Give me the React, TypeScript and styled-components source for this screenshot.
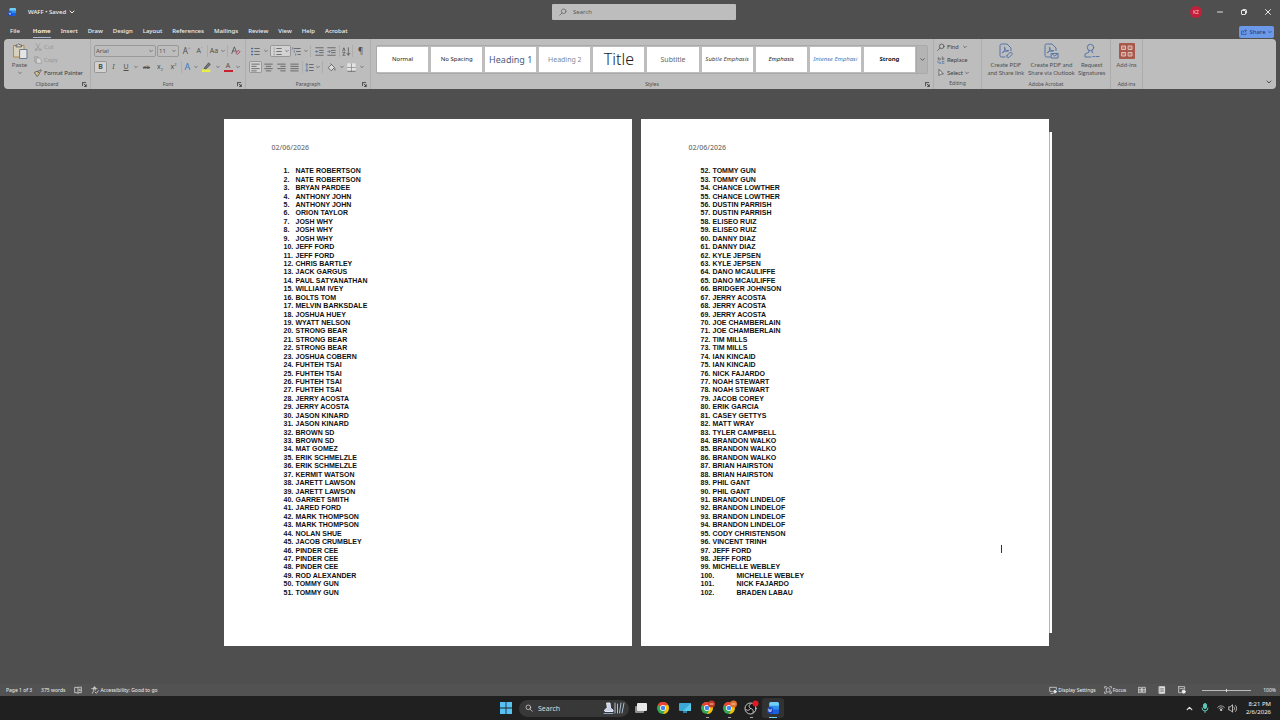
import React from 'react';
import styled, { createGlobalStyle, css } from 'styled-components';

const UI = '"Noto Sans", "Open Sans", sans-serif';

const GlobalStyle = createGlobalStyle`
  * { box-sizing: border-box; }
  body { margin: 0; background: #4f4f4f; font-family: ${UI}; }
  button, input, select { font-family: inherit; margin: 0; padding: 0; border: 0; background: none; color: inherit; }
  ol { list-style: none; margin: 0; padding: 0; }
`;

/* ---------- icons ---------- */

const Svg = styled.svg`
  display: block;
  flex: none;
  fill: none;
  stroke: currentColor;
  stroke-linecap: round;
  stroke-linejoin: round;
`;

type IconProps = { size?: number; children: React.ReactNode; sw?: number };
const Icon = ({ size = 10, children, sw = 1 }: IconProps) => (
  <Svg width={size} height={size} viewBox="0 0 12 12" strokeWidth={sw} aria-hidden="true">
    {children}
  </Svg>
);

const Chevron = ({ size = 5 }: { size?: number }) => (
  <Icon size={size} sw={2}><path d="M2 4l4 4 4-4" /></Icon>
);

const WordLogo = ({ size = 8 }: { size?: number }) => (
  <Svg width={size} height={size} viewBox="0 0 16 16" strokeWidth={0} aria-hidden="true">
    <rect x="3" y="0" width="13" height="16" rx="2" fill="#1b5fe0" />
    <path d="M3 2a2 2 0 012-2h9a2 2 0 012 2v4H3z" fill="#6fcdf8" />
    <path d="M3 5h13v5H3z" fill="#2f8eea" />
    <rect x="0" y="7" width="8" height="8" rx="2" fill="#1443c0" />
    <path d="M2 9.500l1 3.500 1-3 1 3 1-3.500" stroke="#dbe6ff" strokeWidth="1" />
  </Svg>
);

const PasteIcon = () => (
  <Svg width="16" height="16" viewBox="0 0 16 16" strokeWidth="1" aria-hidden="true">
    <path d="M8 14H1.500V2.500H12V6" stroke="#b08b45" fill="#d8cfbd" />
    <path d="M4 3.500V2h1.500L6.800.8 8 2h1.500v1.500z" stroke="#666" fill="#ddd" />
    <rect x="8" y="6.500" width="7" height="9" stroke="#6d7b8c" fill="#e4e4e4" />
  </Svg>
);
const CutIcon = () => <Icon size={8}><path d="M3 1l5 8M9 1L4 9" /><circle cx="3" cy="10" r="1.400" /><circle cx="9" cy="10" r="1.400" /></Icon>;
const CopyIcon = () => <Icon size={8}><path d="M4 9H1V1h5v2" /><path d="M4 3h4l3 3v5H4z" fill="#d4d4d4" /></Icon>;
const BrushIcon = () => <Icon size={8}><path d="M1 5l4-2 3 4-3 4z" fill="#d9c088" /><path d="M6 4l4-3 1 2-3 3" /></Icon>;

const LauncherIcon = () => <Icon size={5} sw={2}><path d="M1 9V1h8" /><path d="M5 5l5 5M10 6v5H6" /></Icon>;

const Letter = styled.span<{ $size?: number; $color?: string; $bar?: string; $italic?: boolean; $bold?: boolean; $deco?: string }>`
  font-size: ${p => p.$size ?? 7}px;
  line-height: 8px;
  color: ${p => p.$color ?? 'inherit'};
  font-style: ${p => (p.$italic ? 'italic' : 'normal')};
  font-weight: ${p => (p.$bold ? 700 : 400)};
  text-decoration: ${p => p.$deco ?? 'none'};
  ${p => p.$bar && css`min-width: 9px; border-bottom: 2px solid ${p.$bar};`}
  sup, sub { font-size: 4px; line-height: 0; }
`;

const ClearIcon = () => <Icon size={10}><path d="M1 9l3-8 3 7M2 6h3" /><path d="M6 8l3-3 2 2-3 3z" stroke="#a5486a" fill="#cf9db0" /></Icon>;
const HighlighterIcon = () => <Icon size={10}><path d="M0 10.500h10" stroke="#e6f042" strokeWidth="3" strokeLinecap="butt" /><path d="M3 7l5-6 2 2-5 5H3z" fill="#777" /></Icon>;
const BulletsIcon = () => (
  <Icon size={9}><path d="M1 2h1M1 6h1M1 10h1" stroke="#3f6ba8" strokeWidth="2" /><path d="M5 2h6M5 6h6M5 10h6" /></Icon>
);
const NumberingIcon = () => (
  <Icon size={9}><path d="M1.500 1v2M1.500 5v2M1.500 9v2" stroke="#888" /><path d="M5 2h6M5 6h6M5 10h6" /></Icon>
);
const MultiIcon = () => (
  <Icon size={9}><path d="M1 1v2M3 5v2M5 9v2" stroke="#4d6f9d" /><path d="M3 2h8M6 6h5M8 10h3" /></Icon>
);
const OutdentIcon = ({ flip }: { flip?: boolean }) => (
  <Icon size={9}><path d="M1 1h10M6 4.500h5M6 7.500h5M1 11h10" /><path d={flip ? 'M1 6h3M3 4.500L4.500 6 3 7.500' : 'M4 6H1M2.500 4.500L1 6l1.500 1.500'} stroke="#4d6f9d" /></Icon>
);
const SortIcon = () => <Icon size={9}><path d="M1 5l1.500-4L4 5M1 7h3l-3 4h3M8.500 1v9.500M6.500 8.500l2 2.500 2-2.500" /></Icon>;
const AlignIcon = ({ kind }: { kind: 'left' | 'center' | 'right' | 'full' }) => {
  const d = {
    left: 'M1 1.500h10M1 4.500h6M1 7.500h10M1 10.500h6',
    center: 'M1 1.500h10M3 4.500h6M1 7.500h10M3 10.500h6',
    right: 'M1 1.500h10M5 4.500h6M1 7.500h10M5 10.500h6',
    full: 'M1 1.500h10M1 4.500h10M1 7.500h10M1 10.500h10',
  }[kind];
  return <Icon size={9}><path d={d} /></Icon>;
};
const SpacingIcon = () => <Icon size={9}><path d="M2.500 1v10M1 2.500L2.500 1 4 2.500M1 9.500L2.500 11 4 9.500" stroke="#4d6f9d" /><path d="M6 2h5M6 6h5M6 10h5" /></Icon>;
const ShadeIcon = () => <Icon size={9}><path d="M2 6l4-4 4 4-4 4zM5 1l1 1M10.500 7.500v2" fill="#dcdcdc" /></Icon>;
const BordersIcon = () => <Icon size={9}><rect x="1" y="1" width="10" height="10" fill="#e4e4e4" stroke="#e4e4e4" /><path d="M6 1v10M1 6h10" stroke="#888" /><path d="M1 11h10" stroke="#444" /></Icon>;

const SearchIcon = ({ size = 8, flip }: { size?: number; flip?: boolean }) => (
  <Icon size={size}>{flip
    ? <><circle cx="7" cy="5" r="3.500" /><path d="M4.500 7.500L1 11" /></>
    : <><circle cx="5" cy="5" r="3.500" /><path d="M7.500 7.500L11 11" /></>}</Icon>
);
const ReplaceIcon = () => <Icon size={8}><path d="M2 2v4h3V3.500H2M8 5V1M8 5h2.500V3H8" stroke="#6a6a6a" /><path d="M1 8c0 2 2 3 4 3M4 9l1.500 2" stroke="#3f6ba8" /><path d="M10.500 8H8v3h2.500" stroke="#3f6ba8" /></Icon>;
const SelectIcon = () => <Icon size={8}><path d="M3 1v9l2.500-2.500L9 7.500z" fill="#e0e0e0" /></Icon>;

const PdfIcon = ({ outlook }: { outlook?: boolean }) => (
  <Svg width="16" height="16" viewBox="0 0 16 16" strokeWidth="1" aria-hidden="true">
    <path d="M7 14H3.500A1.500 1.500 0 012 12.500v-10A1.500 1.500 0 013.500 1H9l4 4v2.500" />
    <path d="M4.500 9.500C6 9 7.500 6.500 7 4.500c-.8-.8-1 .5 0 2S9.500 9 10.500 8s-2.500-.8-6 1.500z" />
    {outlook
      ? <><rect x="8.500" y="10.500" width="6.500" height="4.500" /><path d="M8.500 10.500l3.200 2.500 3.300-2.500" /></>
      : <><path d="M9 12.500l3-3a1.500 1.500 0 012 2l-3 3a1.500 1.500 0 01-2-2z" /></>}
  </Svg>
);
const SignIcon = () => (
  <Svg width="16" height="16" viewBox="0 0 16 16" strokeWidth="1" aria-hidden="true">
    <circle cx="6.500" cy="4.500" r="3.200" />
    <path d="M5 7.500v1.700L1 11v3h6M8 7.500v1.700l1 .6M9 13.500h1.500M12 13.500h3" />
  </Svg>
);
const AddInsIcon = () => (
  <Svg width="16" height="16" viewBox="0 0 16 16" strokeWidth="1" aria-hidden="true">
    <rect x="0" y="0" width="16" height="16" rx="1" fill="#a9594b" stroke="none" />
    <path d="M3 3h3.500v3.500H3zM9.500 3H13v3.500H9.500zM3 9.500h3.500V13H3zM9.500 9.500H13V13H9.500z" stroke="#dcc0ba" fill="#b9796d" />
  </Svg>
);

/* ---------- title bar ---------- */

const Shell = styled.div`
  display: flex;
  flex-direction: column;
  min-height: 100vh;
  background: #4f4f4f;
  color: #e6e6e6;
`;

const TitleBar = styled.header`
  display: grid;
  grid-template-columns: 1fr 184px 1fr;
  align-items: center;
  height: 24px;
  padding-left: 8px;
`;

const DocName = styled.div`
  display: flex;
  align-items: center;
  gap: 12px;
`;

const NameButton = styled.button`
  display: flex;
  align-items: center;
  gap: 3px;
  font-size: 6px;
  font-weight: 500;
  color: #efefef;
`;

const SearchBox = styled.label`
  display: flex;
  align-items: center;
  gap: 6px;
  height: 16px;
  padding: 0 7px;
  border-radius: 1px;
  background: #bdbdbd;
  color: #5a5a5a;

  input { flex: 1; min-width: 0; font-size: 6px; outline: 0; }
  input::placeholder { color: #5a5a5a; opacity: 1; }
`;

const WindowControls = styled.div`
  display: flex;
  justify-content: flex-end;
  gap: 8px;
  padding-right: 4px;
`;

const WindowButton = styled.button`
  display: flex;
  align-items: center;
  justify-content: center;
  width: 16px;
  height: 16px;
`;

const Avatar = styled.span`
  width: 12px;
  height: 12px;
  border-radius: 50%;
  background: #c2203a;
  color: #f5d0d6;
  font-size: 5px;
  line-height: 12px;
`;

/* ---------- ribbon tabs ---------- */

const TabRow = styled.nav`
  display: flex;
  align-items: center;
  justify-content: space-between;
  height: 15px;
  padding: 0 6px 0 10px;
`;

const Tabs = styled.div`
  display: flex;
  gap: 10px;
`;

const Tab = styled.button<{ $active?: boolean }>`
  height: 12px;
  font-size: 6px;
  line-height: 10px;
  font-weight: ${p => (p.$active ? 700 : 500)};
  color: #f0f0f0;
  border-bottom: 1px solid ${p => (p.$active ? '#a9b6d8' : 'transparent')};

  &:first-child { margin-right: 3px; }
`;

const ShareButton = styled.button`
  display: flex;
  align-items: center;
  justify-content: center;
  gap: 2px;
  width: 35px;
  height: 12px;
  border-radius: 2px;
  background: #6c98ea;
  color: #1d3767;
  font-size: 6px;
`;

/* ---------- ribbon ---------- */

const Ribbon = styled.section`
  display: flex;
  height: 50px;
  margin: 0 4px;
  border-radius: 4px;
  background: #bdbdbd;
  color: #505050;
`;

const Group = styled.div<{ $w: number }>`
  display: flex;
  flex-direction: column;
  flex: none;
  width: ${p => p.$w}px;
  padding: 3px 3px 0;
  border-right: 1px solid #adadad;
`;

const GroupBody = styled.div`
  flex: 1;
  display: flex;
  flex-direction: column;
  gap: 4px;
  padding-top: 3px;
`;

const GroupFoot = styled.div`
  display: grid;
  grid-template-columns: 1fr auto 1fr;
  align-items: center;
  height: 10px;
  font-size: 5px;
  line-height: 6px;
  color: #4c4c4c;

  button { justify-self: end; color: #333; }
`;

const ToolRow = styled.div`
  display: flex;
  height: 12px;
`;

const Tool = styled.button<{ $w: number; $on?: boolean; $ml?: number }>`
  display: flex;
  align-items: center;
  justify-content: center;
  gap: 3px;
  flex: none;
  width: ${p => p.$w}px;
  height: 12px;
  margin-left: ${p => p.$ml ?? 0}px;
  border-radius: 2px;
  ${p => p.$on && css`background: #d2d2d2; box-shadow: inset 0 0 0 1px #979797;`}
`;

const Divider = styled.span<{ $w?: number }>`
  flex: none;
  width: 1px;
  height: 12px;
  margin: 0 1px;
  margin-right: ${p => (p.$w ?? 3) - 2}px;
  background: #adadad;
`;

const Combo = styled.div<{ $w: number }>`
  display: flex;
  align-items: center;
  width: ${p => p.$w}px;
  height: 12px;
  padding: 0 2px 0 1px;
  margin-right: 1px;
  border: 1px solid #999;
  border-radius: 2px;

  select { flex: 1; min-width: 0; appearance: none; font-size: 6px; outline: 0; }
`;

const ClipBody = styled.div`
  flex: 1;
  display: flex;
  gap: 4px;
  padding-left: 2px;
`;

const BigButton = styled.button<{ $w: number }>`
  display: flex;
  flex-direction: column;
  align-items: center;
  width: ${p => p.$w}px;
  padding-top: 1px;
  font-size: 6px;
  line-height: 8px;
  gap: 2px;
`;

const Stack = styled.div`
  display: flex;
  flex-direction: column;
  gap: 3px;
`;

const SmallButton = styled.button<{ $dim?: boolean }>`
  display: flex;
  align-items: center;
  gap: 2px;
  height: 10px;
  font-family: Lato, sans-serif;
  font-size: 6px;
  line-height: 8px;
  white-space: nowrap;
  color: ${p => (p.$dim ? '#959595' : '#404040')};
`;

const Gallery = styled.div`
  display: flex;
  width: 552px;
  height: 29px;
  margin-left: 2px;
  border: 1px solid #a9a9a9;
  border-radius: 2px;
`;

const Cards = styled.div`
  flex: 1;
  display: flex;
  gap: 3px;
  padding: 1px 1px 1px 0;
`;

const StyleCard = styled.button<{ $size: number; $color?: string; $italic?: boolean; $bold?: boolean; $light?: boolean }>`
  flex: 1 1 0;
  min-width: 0;
  overflow: hidden;
  white-space: nowrap;
  background: #fff;
  font-size: ${p => p.$size}px;
  line-height: 25px;
  color: ${p => p.$color ?? '#1c1c1c'};
  font-style: ${p => (p.$italic ? 'italic' : 'normal')};
  font-weight: ${p => (p.$bold ? 700 : p.$light ? 300 : 400)};
`;

const GalleryMore = styled.button`
  display: flex;
  align-items: center;
  justify-content: center;
  width: 11px;
  border-left: 1px solid #a9a9a9;
  background: #b4b4b4;
`;

const BigRow = styled.div`
  flex: 1;
  display: flex;
  justify-content: center;
  font-family: Lato, sans-serif;

  button { font-family: inherit; }
  svg { color: #5574a8; }
`;

const RibbonEnd = styled.div`
  flex: 1;
  display: flex;
  justify-content: flex-end;
  align-items: flex-end;
  padding: 4px;
`;

/* ---------- document ---------- */

const Workspace = styled.main`
  flex: 1;
  display: flex;
  justify-content: center;
  align-items: flex-start;
  padding: 30px 5px 0 0;
`;

const Page = styled.article`
  position: relative;
  display: flex;
  flex-direction: column;
  flex: none;
  width: 408px;
  min-height: 527px;
  padding: 24px 48px 49px;
  background: #fff;
  color: #111;

  & + & { margin-left: 9px; }
`;

const NextPageEdge = styled.div`
  width: 3px;
  height: 501px;
  margin-top: 13px;
  background: #fff;
  border-left: 1px solid #b5b5b5;
`;

const PageDate = styled.div`
  margin-bottom: 14px;
  font-size: 7px;
  line-height: 10px;
  font-weight: 500;
  color: #707070;
`;

const Names = styled.ol`
  flex: 1;
  display: grid;
  grid-auto-rows: 1fr;
  padding-left: 12px;
  font-family: "Liberation Sans", Arial, sans-serif;
  font-size: 7px;
  line-height: 8px;
  font-weight: 700;
`;

const NameRow = styled.li<{ $wide: boolean }>`
  display: grid;
  grid-template-columns: ${p => (p.$wide ? 36 : 12)}px 1fr;
  align-items: center;
  min-height: 8px;
`;

const TextCursor = styled.span`
  position: absolute;
  left: 360px;
  top: 426px;
  width: 1px;
  height: 8px;
  background: #333;
`;

/* ---------- status bar ---------- */

const StatusBar = styled.footer`
  display: flex;
  align-items: center;
  justify-content: space-between;
  height: 12px;
  padding: 0 4px 0 6px;
  background: #525252;
  font-size: 5px;
  line-height: 8px;
  color: #f0f0f0;
`;

const StatusGroup = styled.div<{ $gap: number }>`
  display: flex;
  align-items: center;
  gap: ${p => p.$gap}px;
`;

const StatusItem = styled.button`
  display: flex;
  align-items: center;
  gap: 1px;
  font-size: 5px;
  white-space: nowrap;
`;

const Zoom = styled.input`
  appearance: none;
  width: 49px;
  height: 8px;
  margin-left: 4px;

  &::-webkit-slider-runnable-track { height: 1px; background: #bbb; }
  &::-webkit-slider-thumb { appearance: none; width: 1px; height: 3px; margin-top: -1px; background: #ddd; }
`;

/* ---------- taskbar ---------- */

const Taskbar = styled.footer`
  display: grid;
  grid-template-columns: 1fr auto 1fr;
  align-items: center;
  height: 24px;
  padding-right: 9px;
  padding-left: 8px;
  background: #202020;
`;

const Apps = styled.div`
  grid-column: 2;
  display: flex;
  align-items: center;
`;

const TaskButton = styled.button<{ $active?: boolean; $open?: boolean }>`
  position: relative;
  display: flex;
  align-items: center;
  justify-content: center;
  width: 22px;
  height: 20px;
  border-radius: 3px;
  background: ${p => (p.$active ? '#323232' : 'transparent')};

  ${p => (p.$open || p.$active) && css`
    &::after {
      content: '';
      position: absolute;
      bottom: 0;
      width: ${p.$active ? 8 : 3}px;
      height: 1px;
      background: ${p.$active ? '#6fd3f2' : '#a5a5a5'};
    }
  `}
`;

const TaskSearch = styled.label`
  display: flex;
  align-items: center;
  gap: 5px;
  width: 110px;
  height: 17px;
  margin: 0 1px 0 2px;
  padding: 0 4px 0 6px;
  border-radius: 9px;
  background: #383838;

  input { flex: 1; min-width: 0; font-size: 7px; outline: 0; }
  input::placeholder { color: #dcdcdc; opacity: 1; }
`;

const Tray = styled.div`
  display: flex;
  align-items: center;
  justify-content: flex-end;
  gap: 8px;
`;

const Clock = styled.time`
  width: 26px;
  text-align: right;
  white-space: nowrap;
  font-size: 6px;
  line-height: 8px;
  color: #f2f2f2;
`;

const TrayPair = styled.div`
  display: flex;
  gap: 3px;
`;

const Chrome = ({ badge }: { badge?: string }) => (
  <Svg width="16" height="16" viewBox="0 0 16 16" strokeWidth="0" aria-hidden="true">
    <circle cx="8" cy="8" r="6" fill="#34a853" />
    <path d="M8 8L2.800 5A6 6 0 0113.200 5z" fill="#ea4335" />
    <path d="M2.800 5a6 6 0 0110.400 0H8z" fill="#ea4335" />
    <path d="M13.200 5A6 6 0 018 14l2.600-4.500L10.500 5z" fill="#fbbc05" />
    <circle cx="8" cy="8" r="3" fill="#fff" />
    <circle cx="8" cy="8" r="2.300" fill="#4285f4" />
    {badge && <circle cx="12.500" cy="4" r="3.500" fill={badge} />}
    {badge && <path d="M11 4h3" stroke="#f1c9b5" strokeWidth="1" />}
  </Svg>
);

/* ---------- data ---------- */

const firstPage = [
  'NATE ROBERTSON', 'NATE ROBERTSON', 'BRYAN PARDEE', 'ANTHONY JOHN', 'ANTHONY JOHN', 'ORION TAYLOR',
  'JOSH WHY', 'JOSH WHY', 'JOSH WHY', 'JEFF FORD', 'JEFF FORD', 'CHRIS BARTLEY', 'JACK GARGUS',
  'PAUL SATYANATHAN', 'WILLIAM IVEY', 'BOLTS TOM', 'MELVIN BARKSDALE', 'JOSHUA HUEY', 'WYATT NELSON',
  'STRONG BEAR', 'STRONG BEAR', 'STRONG BEAR', 'JOSHUA COBERN', 'FUHTEH TSAI', 'FUHTEH TSAI',
  'FUHTEH TSAI', 'FUHTEH TSAI', 'JERRY ACOSTA', 'JERRY ACOSTA', 'JASON KINARD', 'JASON KINARD',
  'BROWN SD', 'BROWN SD', 'MAT GOMEZ', 'ERIK SCHMELZLE', 'ERIK SCHMELZLE', 'KERMIT WATSON',
  'JARETT LAWSON', 'JARETT LAWSON', 'GARRET SMITH', 'JARED FORD', 'MARK THOMPSON', 'MARK THOMPSON',
  'NOLAN SHUE', 'JACOB CRUMBLEY', 'PINDER CEE', 'PINDER CEE', 'PINDER CEE', 'ROD ALEXANDER',
  'TOMMY GUN', 'TOMMY GUN',
];

const secondPage = [
  'TOMMY GUN', 'TOMMY GUN', 'CHANCE LOWTHER', 'CHANCE LOWTHER', 'DUSTIN PARRISH', 'DUSTIN PARRISH',
  'ELISEO RUIZ', 'ELISEO RUIZ', 'DANNY DIAZ', 'DANNY DIAZ', 'KYLE JEPSEN', 'KYLE JEPSEN',
  'DANO MCAULIFFE', 'DANO MCAULIFFE', 'BRIDGER JOHNSON', 'JERRY ACOSTA', 'JERRY ACOSTA', 'JERRY ACOSTA',
  'JOE CHAMBERLAIN', 'JOE CHAMBERLAIN', 'TIM MILLS', 'TIM MILLS', 'IAN KINCAID', 'IAN KINCAID',
  'NICK FAJARDO', 'NOAH STEWART', 'NOAH STEWART', 'JACOB COREY', 'ERIK GARCIA', 'CASEY GETTYS',
  'MATT WRAY', 'TYLER CAMPBELL', 'BRANDON WALKO', 'BRANDON WALKO', 'BRANDON WALKO', 'BRIAN HAIRSTON',
  'BRIAN HAIRSTON', 'PHIL GANT', 'PHIL GANT', 'BRANDON LINDELOF', 'BRANDON LINDELOF',
  'BRANDON LINDELOF', 'BRANDON LINDELOF', 'CODY CHRISTENSON', 'VINCENT TRINH', 'JEFF FORD',
  'JEFF FORD', 'MICHELLE WEBLEY', 'MICHELLE WEBLEY', 'NICK FAJARDO', 'BRADEN LABAU',
];

const tabs = ['File', 'Home', 'Insert', 'Draw', 'Design', 'Layout', 'References', 'Mailings', 'Review', 'View', 'Help', 'Acrobat'];

const styleCards = [
  { name: 'Normal', size: 6 },
  { name: 'No Spacing', size: 6 },
  { name: 'Heading 1', size: 9, color: '#4a5a7c' },
  { name: 'Heading 2', size: 7, color: '#8089a0' },
  { name: 'Title', size: 16, light: true },
  { name: 'Subtitle', size: 7, color: '#666' },
  { name: 'Subtle Emphasis', size: 6, italic: true, color: '#444' },
  { name: 'Emphasis', size: 6, italic: true },
  { name: 'Intense Emphasi', size: 6, italic: true, color: '#4a78b5' },
  { name: 'Strong', size: 6, bold: true },
];

const NameList = ({ names, start }: { names: string[]; start: number }) => (
  <Names start={start}>
    {names.map((name, i) => (
      <NameRow key={i} $wide={start + i > 99}>
        <span>{start + i}.</span>
        <span>{name}</span>
      </NameRow>
    ))}
  </Names>
);

const Foot = ({ label, launcher }: { label: string; launcher?: boolean }) => (
  <GroupFoot>
    <span />
    <span>{label}</span>
    {launcher && <button aria-label={`${label} settings`}><LauncherIcon /></button>}
  </GroupFoot>
);

const More = ({ w = 7, of }: { w?: number; of: string }) => (
  <Tool $w={w} aria-label={`${of} options`}><Chevron size={4} /></Tool>
);

export default function App() {
  return (
    <Shell>
      <GlobalStyle />
      <TitleBar>
        <DocName>
          <WordLogo />
          <NameButton>WAFF • Saved <Chevron size={6} /></NameButton>
        </DocName>
        <SearchBox>
          <SearchIcon flip />
          <input type="search" placeholder="Search" aria-label="Search" />
        </SearchBox>
        <WindowControls>
          <WindowButton aria-label="Account"><Avatar>KZ</Avatar></WindowButton>
          <WindowButton aria-label="Minimize"><Icon size={6} sw={2}><path d="M1 6h10" /></Icon></WindowButton>
          <WindowButton aria-label="Restore"><Icon size={6} sw={2}><rect x="1" y="3" width="8" height="8" rx="1" /><path d="M4 1h5a2 2 0 012 2v5" /></Icon></WindowButton>
          <WindowButton aria-label="Close"><Icon size={6} sw={2}><path d="M1 1l10 10M11 1L1 11" /></Icon></WindowButton>
        </WindowControls>
      </TitleBar>

      <TabRow>
        <Tabs>{tabs.map(t => <Tab key={t} $active={t === 'Home'}>{t}</Tab>)}</Tabs>
        <ShareButton>
          <Icon size={6}><path d="M4 4H1v7h9V8M4 8c0-3 2-5 6-5M8 1l3 2-3 3" /></Icon>Share<Chevron size={4} />
        </ShareButton>
      </TabRow>

      <Ribbon>
        <Group $w={87}>
          <ClipBody>
            <BigButton $w={21}><PasteIcon />Paste<Chevron size={4} /></BigButton>
            <Stack>
              <SmallButton $dim><CutIcon />Cut</SmallButton>
              <SmallButton $dim><CopyIcon />Copy</SmallButton>
              <SmallButton><BrushIcon />Format Painter</SmallButton>
            </Stack>
          </ClipBody>
          <Foot label="Clipboard" launcher />
        </Group>

        <Group $w={155}>
          <GroupBody>
            <ToolRow>
              <Combo $w={62}><select aria-label="Font"><option>Arial</option></select><Chevron size={4} /></Combo>
              <Combo $w={22}><select aria-label="Font size"><option>11</option></select><Chevron size={4} /></Combo>
              <Tool $w={13} aria-label="Grow font"><Letter $size={8}>A<sup>^</sup></Letter></Tool>
              <Tool $w={13} aria-label="Shrink font"><Letter>A<sup>ˇ</sup></Letter></Tool>
              <Divider />
              <Tool $w={10}><Letter>Aa</Letter></Tool>
              <More of="Case" />
              <Divider />
              <Tool $w={13} aria-label="Clear formatting"><ClearIcon /></Tool>
            </ToolRow>
            <ToolRow>
              <Tool $w={13} $on><Letter $bold>B</Letter></Tool>
              <Tool $w={13}><Letter $italic>I</Letter></Tool>
              <Tool $w={12}><Letter $deco="underline">U</Letter></Tool>
              <More w={8} of="Underline" />
              <Tool $w={13}><Letter $size={6} $deco="line-through">ab</Letter></Tool>
              <Tool $w={14}><Letter>x<sub>2</sub></Letter></Tool>
              <Tool $w={13}><Letter>x<sup>2</sup></Letter></Tool>
              <Divider />
              <Tool $w={9}><Letter $size={9} $color="#3a7abd">A</Letter></Tool>
              <More w={8} of="Text effects" />
              <Tool $w={14} aria-label="Highlight"><HighlighterIcon /></Tool>
              <More w={8} of="Highlight" />
              <Tool $w={12}><Letter $bar="#c8202c">A</Letter></Tool>
              <More w={8} of="Font color" />
            </ToolRow>
          </GroupBody>
          <Foot label="Font" launcher />
        </Group>

        <Group $w={125}>
          <GroupBody>
            <ToolRow>
              <Tool $w={13} aria-label="Bullets"><BulletsIcon /></Tool>
              <More of="Bullets" />
              <Tool $w={21} $ml={1} $on aria-label="Numbering"><NumberingIcon /><Chevron size={4} /></Tool>
              <Tool $w={11} aria-label="Multilevel list"><MultiIcon /></Tool>
              <More of="Multilevel list" />
              <Divider $w={4} />
              <Tool $w={12} aria-label="Decrease indent"><OutdentIcon /></Tool>
              <Tool $w={13} aria-label="Increase indent"><OutdentIcon flip /></Tool>
              <Divider />
              <Tool $w={10} aria-label="Sort"><SortIcon /></Tool>
              <Divider $w={4} />
              <Tool $w={11}><Letter $size={8}>¶</Letter></Tool>
            </ToolRow>
            <ToolRow>
              <Tool $w={13} $on aria-label="Align left"><AlignIcon kind="left" /></Tool>
              <Tool $w={13} aria-label="Center"><AlignIcon kind="center" /></Tool>
              <Tool $w={13} aria-label="Align right"><AlignIcon kind="right" /></Tool>
              <Tool $w={13} aria-label="Justify"><AlignIcon kind="full" /></Tool>
              <Divider $w={4} />
              <Tool $w={9} aria-label="Line spacing"><SpacingIcon /></Tool>
              <More of="Line spacing" />
              <Divider $w={4} />
              <Tool $w={13} aria-label="Shading"><ShadeIcon /></Tool>
              <More of="Shading" />
              <Tool $w={13} aria-label="Borders"><BordersIcon /></Tool>
              <More of="Borders" />
            </ToolRow>
          </GroupBody>
          <Foot label="Paragraph" launcher />
        </Group>

        <Group $w={563}>
          <GroupBody>
            <Gallery>
              <Cards>
                {styleCards.map(s => (
                  <StyleCard key={s.name} $size={s.size} $color={s.color} $italic={s.italic} $bold={s.bold} $light={s.light}>
                    {s.name}
                  </StyleCard>
                ))}
              </Cards>
              <GalleryMore aria-label="More styles"><Chevron /></GalleryMore>
            </Gallery>
          </GroupBody>
          <Foot label="Styles" launcher />
        </Group>

        <Group $w={48}>
          <Stack>
            <SmallButton><SearchIcon flip />Find<span /><Chevron size={4} /></SmallButton>
            <SmallButton><ReplaceIcon />Replace</SmallButton>
            <SmallButton><SelectIcon />Select<Chevron size={4} /></SmallButton>
          </Stack>
          <Foot label="Editing" />
        </Group>

        <Group $w={129}>
          <BigRow>
            <BigButton $w={42}><PdfIcon /><span>Create PDF<br />and Share link</span></BigButton>
            <BigButton $w={50}><PdfIcon outlook /><span>Create PDF and<br />Share via Outlook</span></BigButton>
            <BigButton $w={31}><SignIcon /><span>Request<br />Signatures</span></BigButton>
          </BigRow>
          <Foot label="Adobe Acrobat" />
        </Group>

        <Group $w={32}>
          <BigRow>
            <BigButton $w={26}><AddInsIcon />Add-ins</BigButton>
          </BigRow>
          <Foot label="Add-ins" />
        </Group>

        <RibbonEnd><button aria-label="Collapse ribbon"><Chevron size={6} /></button></RibbonEnd>
      </Ribbon>

      <Workspace>
        <Page>
          <PageDate>02/06/2026</PageDate>
          <NameList names={firstPage} start={1} />
        </Page>
        <Page>
          <PageDate>02/06/2026</PageDate>
          <NameList names={secondPage} start={52} />
          <TextCursor />
        </Page>
        <NextPageEdge />
      </Workspace>

      <StatusBar>
        <StatusGroup $gap={9}>
          <StatusItem>Page 1 of 3</StatusItem>
          <StatusItem>375 words</StatusItem>
          <StatusItem aria-label="Proofing"><Icon size={8}><path d="M6 2v9M6 2H1v8h4l1 1 1-1h4V2zM8 5h1.500M8 7h1.500" /></Icon></StatusItem>
          <StatusItem>
            <Icon size={8}><circle cx="5" cy="2" r="1" /><path d="M1 4h8M4 4v3l-2 4M6.500 4v2M6 9l2 2 3-4" /></Icon>
            Accessibility: Good to go
          </StatusItem>
        </StatusGroup>
        <StatusGroup $gap={12}>
          <StatusGroup $gap={8}>
            <StatusItem>
              <Icon size={8}><path d="M5 8H1V2h10v3M3 11h3" /><circle cx="9" cy="8.500" r="2" fill="#ddd" /></Icon>
              Display Settings
            </StatusItem>
            <StatusItem>
              <Icon size={8}><path d="M1 3V1h2M9 1h2v2M1 9v2h2M11 9v2H9M4 3h3l2 2v4H4z" /></Icon>
              Focus
            </StatusItem>
          </StatusGroup>
          <StatusItem aria-label="Read mode"><Icon size={8}><path d="M1 2h4v8H1zM7 2h4v8H7zM1 5h4M7 5h4M1 7.500h4M7 7.500h4" /></Icon></StatusItem>
          <StatusItem aria-label="Print layout"><Icon size={8}><path d="M2 1h8v10H2z" fill="#ddd" /><path d="M4 4h4M4 6h4M4 8h4" stroke="#666" /></Icon></StatusItem>
          <StatusItem aria-label="Web layout"><Icon size={8}><path d="M1 1h9v4M1 1v9h4M3 4h5" /><circle cx="8.500" cy="8.500" r="2.500" fill="#eee" /></Icon></StatusItem>
          <Zoom type="range" min={0} max={100} defaultValue={50} aria-label="Zoom" />
          <StatusItem>100%</StatusItem>
        </StatusGroup>
      </StatusBar>

      <Taskbar>
        <Apps>
          <TaskButton aria-label="Start">
            <Svg width="12" height="12" viewBox="0 0 12 12" strokeWidth="0" aria-hidden="true">
              <path d="M0 0h5.600v5.600H0zM6.400 0H12v5.600H6.400zM0 6.400h5.600V12H0zM6.400 6.400H12V12H6.400z" fill="#55c2f3" />
            </Svg>
          </TaskButton>
          <TaskSearch>
            <SearchIcon size={8} />
            <input type="search" placeholder="Search" aria-label="Search the computer" />
            <Svg width="22" height="12" viewBox="0 0 22 12" strokeWidth="1" aria-hidden="true">
              <path d="M4 1h3l.5 5 2.500 2v1.500H2L1.500 8 4 6z" fill="#c9d2ea" stroke="#e6e9f2" />
              <path d="M1 11.500h9" stroke="#8ea6c9" />
              <path d="M12 1v10M14.500 2v9M18 1l-1.500 10M21 1l-2 10" stroke="#a9bdd2" />
            </Svg>
          </TaskSearch>
          <TaskButton aria-label="Task view">
            <Icon size={12} sw={0}><rect x="0" y="4" width="9" height="7" rx="1" fill="#8c8c8c" /><rect x="2" y="1" width="10" height="8" rx="1" fill="#e9e9e9" /></Icon>
          </TaskButton>
          <TaskButton aria-label="Chrome"><Chrome /></TaskButton>
          <TaskButton aria-label="Remote desktop">
            <Icon size={12} sw={0}><rect x="0" y="1" width="12" height="8" rx="1" fill="#3aa9d8" /><path d="M12 1v8H4z" fill="#59c9ea" /><path d="M4 11h4V9H4z" fill="#2b7fae" /></Icon>
          </TaskButton>
          <TaskButton $open aria-label="Chrome, profile one"><Chrome badge="#c23a26" /></TaskButton>
          <TaskButton $open aria-label="Chrome, profile two"><Chrome badge="#e0702a" /></TaskButton>
          <TaskButton $open aria-label="OBS Studio">
            <Svg width="16" height="16" viewBox="0 0 16 16" strokeWidth="1" aria-hidden="true">
              <circle cx="7.500" cy="8.500" r="5.500" fill="#151515" stroke="#cfcfcf" />
              <path d="M7.500 8.500c-2-1-2-3.500 0-4.500M7.500 8.500c2 0 3.500 2 2.500 4M7.500 8.500c-1 2-3 2.500-4.500 1" stroke="#cfcfcf" />
              <circle cx="12.500" cy="3.500" r="3" fill="#e01a22" stroke="none" />
            </Svg>
          </TaskButton>
          <TaskButton $active aria-label="Word"><WordLogo size={12} /></TaskButton>
        </Apps>
        <Tray>
          <Icon size={7} sw={2}><path d="M2 8l4-4 4 4" /></Icon>
          <Svg width="8" height="10" viewBox="0 0 8 10" strokeWidth="1" color="#5cc4b4" aria-hidden="true"><rect x="2.500" y=".5" width="3" height="5" rx="1.500" fill="#5cc4b4" /><path d="M1 5a3 3 0 006 0M4 8v1.500" /></Svg>
          <TrayPair>
            <Icon size={8} sw={1}><path d="M1 5c3-3 7-3 10 0M3 7c2-2 4-2 6 0" /><circle cx="6" cy="9" r="1" fill="currentColor" /></Icon>
            <Icon size={9}><path d="M1 4v4h2l3 3V1L3 4zM8 4c1 1 1 3 0 4M10 2c2 2 2 6 0 8" /></Icon>
          </TrayPair>
          <Clock>8:21 PM<br />2/6/2026</Clock>
        </Tray>
      </Taskbar>
    </Shell>
  );
}
